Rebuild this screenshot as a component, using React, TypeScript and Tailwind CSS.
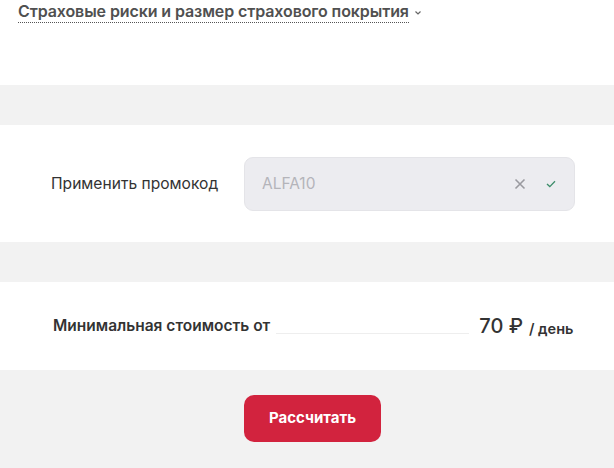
export default function App() {
  return (
    <div className="w-[614px] h-[468px] overflow-hidden bg-white font-['Inter',sans-serif]">
      <div className="h-[85px] pl-[18px] pt-[1px]">
        <button className="flex items-center gap-[5px] text-[#505050]">
          <span className="text-[16px] font-semibold leading-[20px] tracking-[-0.1px] border-b border-dotted border-[#555] pb-[1px]">
            Страховые риски и размер страхового покрытия
          </span>
          <svg width="8" height="6" viewBox="0 0 8 6" className="mt-[2px]">
            <path d="M1.5 1.5 L4 4 L6.5 1.5" fill="none" stroke="#666" strokeWidth="1.2" />
          </svg>
        </button>
      </div>

      <div className="h-[40px] bg-[#f2f2f2]" />

      <div className="h-[117px] flex items-center">
        <div className="w-[244px] pl-[51px] text-[15.6px] text-[#333]">Применить промокод</div>
        <div className="w-[331px] h-[54px] rounded-[9px] bg-[#ececf0] border border-[#e4e4e8] flex items-center pl-[17px] pr-[18px]">
          <span className="flex-1 text-[15.5px] text-[#b4b4ba]">ALFA10</span>
          <svg width="12" height="12" viewBox="0 0 12 12" className="mr-[20px]">
            <path d="M1.5 1.5 L10.5 10.5 M10.5 1.5 L1.5 10.5" stroke="#9a9aa0" strokeWidth="1.6" />
          </svg>
          <svg width="10" height="8" viewBox="0 0 10 8">
            <path d="M1 4 L3.8 6.6 L9 1.2" fill="none" stroke="#3c8c6a" strokeWidth="1.3" />
          </svg>
        </div>
      </div>

      <div className="h-[40px] bg-[#f2f2f2]" />

      <div className="h-[88px] flex items-center pl-[53px] pr-[40px]">
        <span className="text-[15.5px] font-semibold text-[#333]">Минимальная стоимость от</span>
        <div className="w-[193px] ml-[6px] mr-[10px] mt-[14px] border-b border-[#eeeeee]" />
        <span className="text-[20px] font-medium text-[#333]">70 ₽</span>
        <span className="ml-[6px] mt-[5px] text-[14.5px] font-semibold text-[#333]">/ день</span>
      </div>

      <div className="h-[98px] bg-[#f2f2f2] flex justify-center pt-[25px] pl-[11px]">
        <button className="w-[137px] h-[47px] rounded-[10px] bg-[#d2233e] text-white text-[15px] font-bold">
          Рассчитать
        </button>
      </div>
    </div>
  );
}
